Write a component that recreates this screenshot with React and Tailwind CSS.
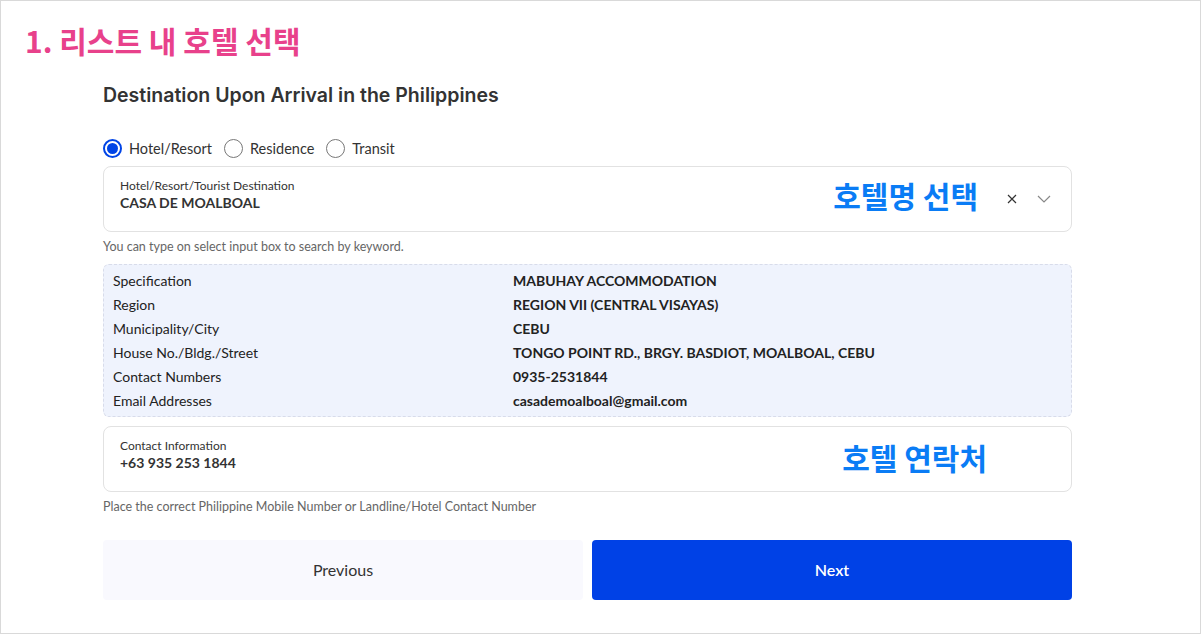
import { useState } from "react";

const DETAILS = [
  ["Specification", "MABUHAY ACCOMMODATION"],
  ["Region", "REGION VII (CENTRAL VISAYAS)"],
  ["Municipality/City", "CEBU"],
  ["House No./Bldg./Street", "TONGO POINT RD., BRGY. BASDIOT, MOALBOAL, CEBU"],
  ["Contact Numbers", "0935-2531844"],
  ["Email Addresses", "casademoalboal@gmail.com"],
];

const OPTIONS = ["Hotel/Resort", "Residence", "Transit"];

function Radio({ label, checked, onClick }) {
  return (
    <button className="flex items-center gap-[7px]" onClick={onClick}>
      <span
        className={
          checked
            ? "flex h-[19px] w-[19px] items-center justify-center rounded-full border-2 border-[#0044e6]"
            : "h-[19px] w-[19px] rounded-full border border-[#777]"
        }
      >
        {checked && <span className="h-[11px] w-[11px] rounded-full bg-[#0044e6]" />}
      </span>
      <span className="text-[14.5px] text-[#333]">{label}</span>
    </button>
  );
}

function App() {
  const [type, setType] = useState("Hotel/Resort");

  return (
    <div
      className="h-[634px] w-[1201px] border border-[#d9d9d9] bg-white"
      style={{ fontFamily: "Lato, 'Noto Sans CJK KR', sans-serif" }}
    >
      <h1
        className="ml-[24px] mt-[20px] text-[30px] font-bold leading-[38px] text-[#e8418b]"
        style={{ fontFamily: "'Noto Sans CJK KR', sans-serif" }}
      >
        1. 리스트 내 호텔 선택
      </h1>

      <div className="ml-[102px] w-[969px]">
        <h2
          className="mt-[22px] text-[19.5px] font-semibold leading-[28px] text-[#333]"
          style={{ fontFamily: "Inter, sans-serif" }}
        >
          Destination Upon Arrival in the Philippines
        </h2>

        <div className="mt-[29px] flex items-center gap-[12px]">
          {OPTIONS.map((o) => (
            <Radio key={o} label={o} checked={type === o} onClick={() => setType(o)} />
          ))}
        </div>

        {/* hotel select */}
        <div className="mt-[6px] flex h-[66px] items-center rounded-[8px] border border-[#e2e2e2] pl-[16px] pr-[20px]">
          <div className="flex-1 self-start pt-[11px]">
            <div className="text-[12px] leading-[16px] text-[#333]">Hotel/Resort/Tourist Destination</div>
            <div className="text-[14px] font-bold leading-[18px] text-[#333]">CASA DE MOALBOAL</div>
          </div>
          <span
            className="mb-[6px] mr-[28px] text-[30px] font-bold text-[#0a7cf5]"
            style={{ fontFamily: "'Noto Sans CJK KR', sans-serif" }}
          >
            호텔명 선택
          </span>
          <svg width="12" height="12" viewBox="0 0 12 12" className="mr-[19px]">
            <path d="M2 2l8 8M10 2l-8 8" stroke="#333" strokeWidth="1.2" />
          </svg>
          <svg width="14" height="8" viewBox="0 0 14 8">
            <path d="M1 1l6 6 6-6" stroke="#888" strokeWidth="1.2" fill="none" />
          </svg>
        </div>
        <p className="mt-[7px] text-[12.5px] leading-[16px] text-[#666]">
          You can type on select input box to search by keyword.
        </p>

        {/* details */}
        <div className="mt-[9px] rounded-[6px] border border-dashed border-[#d8dcea] bg-[#eff3fd] px-[9px] pb-[3px] pt-[4px]">
          {DETAILS.map(([k, v]) => (
            <div key={k} className="flex text-[14px] leading-[24px] text-[#222]">
              <span className="w-[400px]">{k}</span>
              <span className="font-bold">{v}</span>
            </div>
          ))}
        </div>

        {/* contact */}
        <div className="mt-[9px] flex h-[66px] items-center rounded-[8px] border border-[#e2e2e2] pl-[16px] pr-[84px]">
          <div className="flex-1 self-start pt-[11px]">
            <div className="text-[12px] leading-[16px] text-[#333]">Contact Information</div>
            <div className="text-[14px] font-bold leading-[18px] text-[#333]">+63 935 253 1844</div>
          </div>
          <span
            className="mb-[2px] text-[30px] font-bold text-[#0a7cf5]"
            style={{ fontFamily: "'Noto Sans CJK KR', sans-serif" }}
          >
            호텔 연락처
          </span>
        </div>
        <p className="mt-[7px] text-[12.5px] leading-[16px] text-[#666]">
          Place the correct Philippine Mobile Number or Landline/Hotel Contact Number
        </p>

        <div className="mt-[25px] flex gap-[9px]">
          <button className="h-[60px] flex-1 rounded-[4px] bg-[#f9f9fe] text-[16px] text-[#333]">
            Previous
          </button>
          <button className="h-[60px] flex-1 rounded-[4px] bg-[#0041e6] text-[16px] font-semibold text-white">
            Next
          </button>
        </div>
      </div>
    </div>
  );
}

export default App;
